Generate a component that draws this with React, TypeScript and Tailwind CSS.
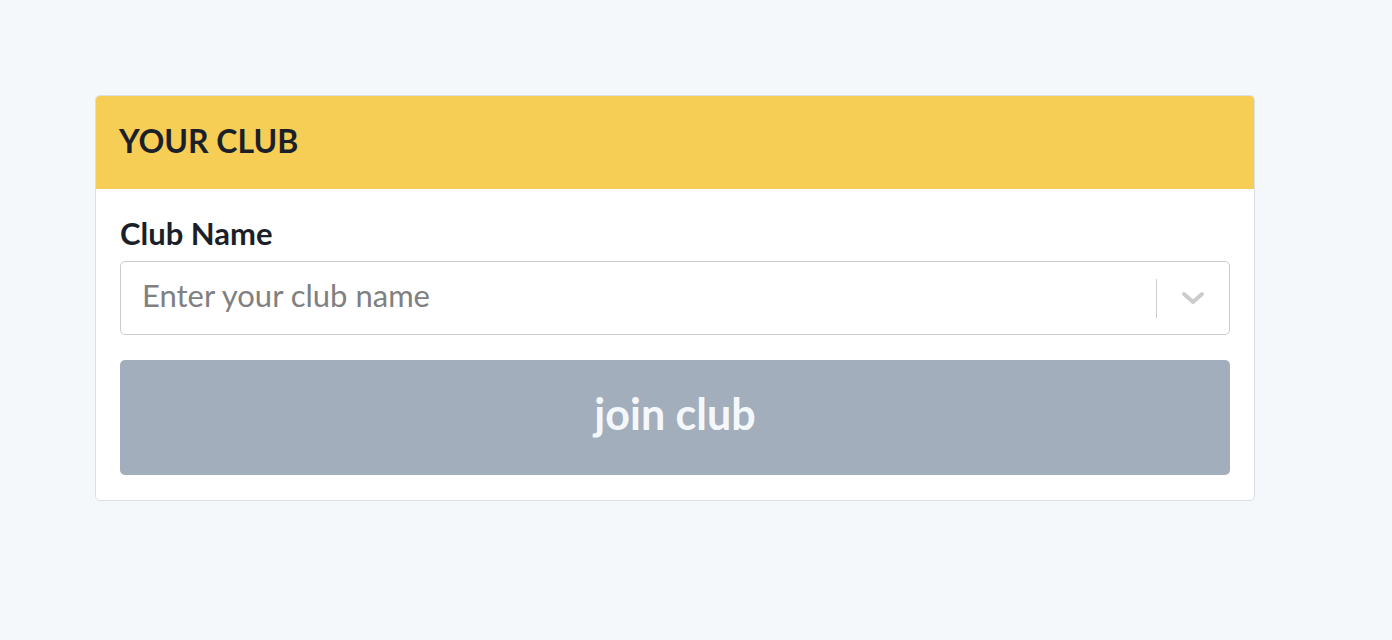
import React from "react"

function Chevron() {
  return (
    <svg width="24" height="14" viewBox="0 0 24 14" fill="none">
      <path d="M3 3l9 8 9-8" stroke="#cccccc" strokeWidth="4" strokeLinecap="round" strokeLinejoin="round" />
    </svg>
  )
}

export default function App() {
  return (
    <div className="min-h-screen bg-[#f5f8fb] pt-[95px] pl-[95px]" style={{ fontFamily: "Lato, 'Open Sans', sans-serif" }}>
      <div className="w-[1160px] overflow-hidden rounded-[5px] border border-[#dae0e6] bg-white">
        <div className="flex h-[93px] items-center bg-[#f6ce55] px-[23px] pb-[4px]">
          <h2 className="text-[32px] font-bold uppercase leading-none text-[#1b1f29]">Your Club</h2>
        </div>
        <div className="flex flex-col px-6 pt-[28px] pb-[25px]">
          <label className="mb-[12px] text-[31px] font-bold leading-[32px] text-[#1b1f29]">Club Name</label>
          <div className="flex h-[74px] items-center rounded-[5px] border border-[#cccccc] bg-white">
            <span className="flex-1 pb-[5px] pl-[21px] text-[31px] text-[#808080]">Enter your club name</span>
            <div className="h-[39px] w-px bg-[#cccccc]" />
            <div className="flex w-[72px] items-center justify-center">
              <Chevron />
            </div>
          </div>
          <button className="mt-[25px] flex h-[115px] items-center justify-center rounded-[5px] bg-[#a3aebd] pb-[6px] text-[43px] font-bold text-[#f5f8fb]">
            join club
          </button>
        </div>
      </div>
    </div>
  )
}
